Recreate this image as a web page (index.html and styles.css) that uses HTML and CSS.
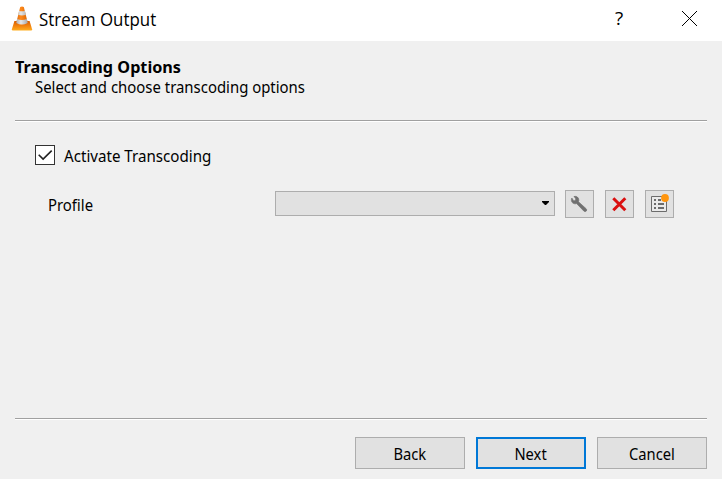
FILE: index.html
```html
<!DOCTYPE html>
<html lang="en">
<head>
<meta charset="utf-8">
<title>Stream Output</title>
<link rel="stylesheet" href="styles.css">
</head>
<body>
<div class="window">
  <header class="titlebar">
    <svg class="cone" width="22" height="26" viewBox="0 0 22 26">
      <defs>
        <linearGradient id="orange"><stop offset="0" stop-color="#d96a10"/><stop offset=".4" stop-color="#ff8a1c"/><stop offset="1" stop-color="#d96400"/></linearGradient>
        <linearGradient id="white"><stop offset="0" stop-color="#b0b0b0"/><stop offset=".4" stop-color="#e6e6e6"/><stop offset="1" stop-color="#a8a8a8"/></linearGradient>
        <linearGradient id="base" x2="0" y2="1"><stop offset="0" stop-color="#d85c00"/><stop offset=".6" stop-color="#f58a10"/><stop offset="1" stop-color="#ffae20"/></linearGradient>
      </defs>
      <path d="M3.4 16h15.2l2.5 8.2q.2 1.3-1 1.3H1.9q-1.2 0-1-1.3z" fill="url(#base)"/>
      <path d="M9.2 2Q11 .8 12.8 2l4 16q-5.8 4.4-11.6 0z" fill="url(#orange)"/>
      <path d="M8.1 5.8q2.9 1 5.8 0L15 9.7q-4 1.5-8 0zM6.1 14q4.9 1.8 9.8 0l.8 4q-5.7 3.2-11.4 0z" fill="url(#white)"/>
    </svg>
    <h1 class="title"><span class="t-title">Stream Output</span></h1>
    <span class="help">?</span>
    <svg class="close" width="17" height="17" viewBox="0 0 17 17"><path d="M1 1l15 15M16 1L1 16" stroke="#000"/></svg>
  </header>
  <section class="intro">
    <h2 class="heading"><span class="t-heading">Transcoding Options</span></h2>
    <p class="sub"><span class="t-sub">Select and choose transcoding options</span></p>
  </section>
  <main class="content">
    <label class="check">
      <span class="box"><svg width="18" height="18" viewBox="0 0 18 18"><path d="M2.7 8.7l4.4 4.4 8.6-8.5" fill="none" stroke="#222" stroke-width="1.6"/></svg></span>
      <span class="t-check">Activate Transcoding</span>
    </label>
    <div class="profile">
      <span class="profile-label"><span class="t-profile">Profile</span></span>
      <div class="combo"><svg width="7" height="4" viewBox="0 0 7 4"><path d="M0 0h7v1L4 4H3L0 1z"/></svg></div>
      <button class="tool"><svg width="27" height="26" viewBox="0 0 27 26"><path d="M8 5.5c2.3-.6 4.8.8 4.8 3.4 0 .8-.1 1.3-.4 1.8l7.7 7q1.2 1.2.2 2.3-1.1 1.1-2.5 0l-7.2-7.4c-2.8.8-5.5-1-5.2-4 0-.6.2-1 .5-1.5l1.4 2.3q1.1.7 2-.2t.2-2z" fill="#707070" stroke="#707070" stroke-width=".7"/></svg></button>
      <button class="tool"><svg width="27" height="26" viewBox="0 0 27 26"><path d="M7.3 7.3l12 12M19.3 7.3l-12 12" stroke="#da1010" stroke-width="3"/></svg></button>
      <button class="tool"><svg width="27" height="26" viewBox="0 0 27 26"><path d="M5.5 5.5h15v15h-15z" fill="#eaeaea" stroke="#6c6c6c"/><path d="M8 8h2v2H8zM8 12h2v2H8zM8 16h2v2H8zM12 8h3v2h-3zM12 12h6v2h-6zM12 16h6v2h-6z" fill="#6c6c6c"/><circle cx="19" cy="7" r="3.9" fill="#ff950d"/></svg></button>
    </div>
  </main>
  <footer class="footer">
    <button class="btn"><span class="t-btn">Back</span></button>
    <button class="btn primary"><span class="t-btn">Next</span></button>
    <button class="btn"><span class="t-btn">Cancel</span></button>
  </footer>
</div>
</body>
</html>
```
FILE: styles.css
```css
* { box-sizing: border-box; }
body { margin: 0; background: #f0f0f0; color: #000; font: 16px/20px "Noto Sans", "Open Sans", sans-serif; }
h1, h2, p { margin: 0; font-size: inherit; font-weight: 400; }
svg { display: block; }
button { padding: 0; font: inherit; color: inherit; }
span[class^="t-"] { display: inline-block; white-space: nowrap; transform-origin: 0 50%; }
.window { display: flex; flex-direction: column; width: 722px; height: 479px; }
.titlebar { display: flex; align-items: center; height: 41px; padding: 0 24px 3px 11px; background: #fff; }
.cone { margin-top: -2px; }
.title { margin-left: 6px; font-family: "Open Sans", sans-serif; font-size: 18px; flex: 1; }
.t-title { transform: scaleX(.937); }
.help { width: 10px; font-family: "Open Sans", sans-serif; font-size: 19px; margin: -2px 56px 0 0; }
.close { margin-top: -1px; }
.intro { height: 81px; margin: 0 15px; padding-top: 17px; border-bottom: 1px solid #fff; box-shadow: inset 0 -1px #a0a0a0; }
.heading { font-weight: 700; line-height: 18px; height: 19px; }
.t-heading { transform: scaleX(1.012); }
.sub { padding-left: 20px; }
.t-sub { transform: scaleX(.932); }
.content { flex: 1; padding: 23px 48px 0 35px; }
.check { display: flex; align-items: center; height: 20px; gap: 9px; }
.box { width: 20px; height: 20px; border: 1px solid #333; background: #fff; }
.t-check { transform: translateY(1px) scaleX(.945); }
.profile { display: flex; align-items: center; height: 28px; margin-top: 25px; padding-left: 13px; }
.profile-label { width: 227px; }
.t-profile { transform: translateY(1px) scaleX(.93); }
.combo { display: flex; align-items: center; justify-content: flex-end; width: 280px; height: 25px; padding-right: 5px; margin: -1px 0 0; border: 1px solid #adadad; background: #e1e1e1; }
.combo svg { margin-top: -1px; }
.tool { flex: none; width: 29px; height: 28px; margin-left: 10px; border: 1px solid #adadad; background: #e1e1e1; }
.tool + .tool { margin-left: 11px; }
.footer { display: flex; justify-content: flex-end; gap: 11px; height: 61px; margin: 0 15px; padding-top: 18px; border-top: 1px solid #a0a0a0; box-shadow: inset 0 1px #fff; }
.btn { width: 110px; height: 32px; border: 1px solid #adadad; background: #e1e1e1; }
.primary { border: 2px solid #0078d7; }
span.t-btn.t-btn { transform: translateY(1px) scaleX(.92); transform-origin: 50% 50%; }
```
